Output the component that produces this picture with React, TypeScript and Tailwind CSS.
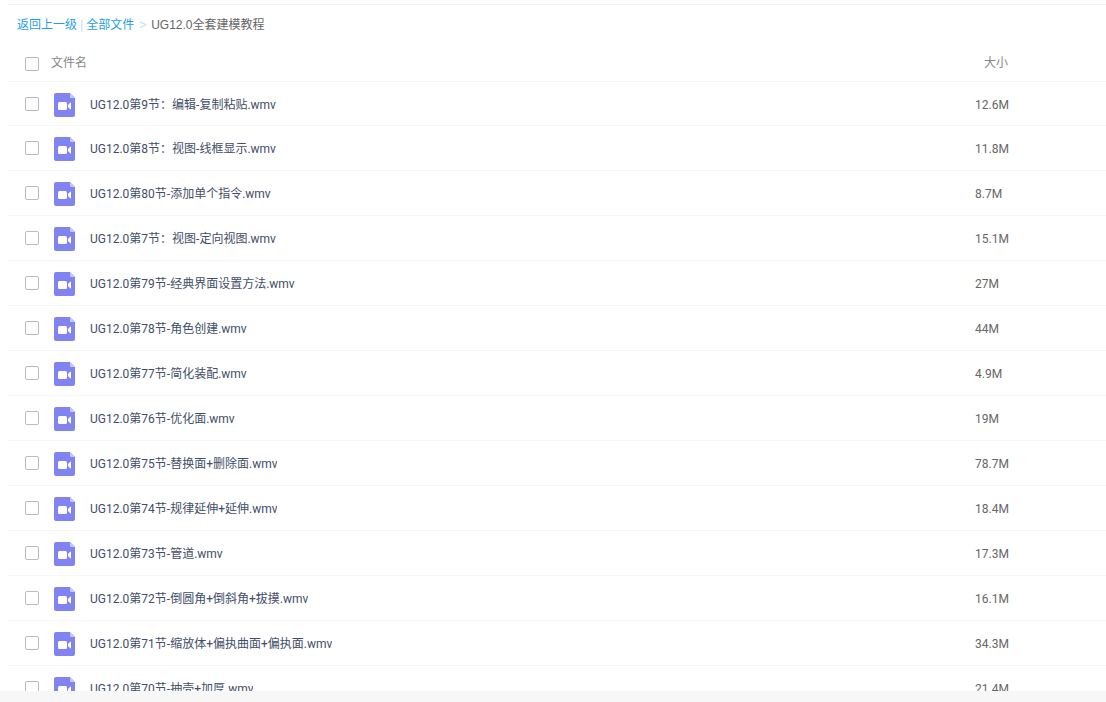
import React, { useState } from "react";

type FileItem = {
  name: string;
  size: string;
};

const files: FileItem[] = [
  { name: "UG12.0第9节：编辑-复制粘贴.wmv", size: "12.6M" },
  { name: "UG12.0第8节：视图-线框显示.wmv", size: "11.8M" },
  { name: "UG12.0第80节-添加单个指令.wmv", size: "8.7M" },
  { name: "UG12.0第7节：视图-定向视图.wmv", size: "15.1M" },
  { name: "UG12.0第79节-经典界面设置方法.wmv", size: "27M" },
  { name: "UG12.0第78节-角色创建.wmv", size: "44M" },
  { name: "UG12.0第77节-简化装配.wmv", size: "4.9M" },
  { name: "UG12.0第76节-优化面.wmv", size: "19M" },
  { name: "UG12.0第75节-替换面+删除面.wmv", size: "78.7M" },
  { name: "UG12.0第74节-规律延伸+延伸.wmv", size: "18.4M" },
  { name: "UG12.0第73节-管道.wmv", size: "17.3M" },
  { name: "UG12.0第72节-倒圆角+倒斜角+拔摸.wmv", size: "16.1M" },
  { name: "UG12.0第71节-缩放体+偏执曲面+偏执面.wmv", size: "34.3M" },
  { name: "UG12.0第70节-抽壳+加厚.wmv", size: "21.4M" },
];

const VideoIcon: React.FC = () => (
  <svg width="21" height="24" viewBox="0 0 21 24" className="shrink-0" aria-hidden="true">
    <path d="M2 0H16l5 5v17a2 2 0 0 1-2 2H2a2 2 0 0 1-2-2V2a2 2 0 0 1 2-2z" fill="#8183f1" />
    <path d="M16 0l5 5h-4a1 1 0 0 1-1-1z" fill="#c6c7fb" />
    <rect x="4" y="9" width="9" height="8" rx="1.500" fill="#fff" />
    <path d="M14 12l2.200-2.200q.8-.6.8.4v5.600q0 1-.8.4L14 14z" fill="#fff" />
  </svg>
);

interface CheckBoxProps {
  label: string;
  checked: boolean;
  onChange: () => void;
}

const CheckBox: React.FC<CheckBoxProps> = ({ label, checked, onChange }) => (
  <input
    type="checkbox"
    aria-label={label}
    checked={checked}
    onChange={onChange}
    className="block size-3.5 appearance-none rounded-xs border border-[#b9bbc4] bg-white checked:border-[#09aaff] checked:bg-[#09aaff]"
  />
);

const App: React.FC = () => {
  const [selected, setSelected] = useState<string[]>([]);

  const allSelected = selected.length === files.length;

  const toggle = (name: string) => {
    setSelected((prev) => (prev.includes(name) ? prev.filter((n) => n !== name) : [...prev, name]));
  };

  return (
    <div className="flex h-screen flex-col bg-white pt-1 font-['Roboto','Noto_Sans_CJK_SC',sans-serif] text-xs text-[#424e67]">
      <main className="min-h-0 flex-1 overflow-hidden pl-2">
        <nav
          aria-label="路径"
          className="flex h-10 items-center border-t border-[#f3f3f5] pl-[9px] font-['Liberation_Sans','Noto_Sans_CJK_SC',sans-serif]"
        >
          <a href="#parent" className="text-[#1e9fe8]">返回上一级</a>
          <span className="px-[3px] text-[#c4dbfe]">|</span>
          <a href="#all" className="text-[#1e9fe8]">全部文件</a>
          <span className="px-[5px] text-[#c4dbfe]">&gt;</span>
          <span className="text-[#666666]">UG12.0全套建模教程</span>
        </nav>
        <table className="w-full table-fixed border-separate border-spacing-0 text-left">
          <thead>
            <tr className="h-[38px] text-[#888888]">
              <th className="w-[43px] border-b border-[#f5f6f8] p-0 pt-0.5 pl-[17px]">
                <CheckBox
                  label="全选"
                  checked={allSelected}
                  onChange={() => setSelected(allSelected ? [] : files.map((f) => f.name))}
                />
              </th>
              <th className="border-b border-[#f5f6f8] p-0 font-normal">文件名</th>
              <th className="w-[131px] border-b border-[#f5f6f8] p-0 pl-[9px] font-normal">大小</th>
            </tr>
          </thead>
          <tbody>
            {files.map((file) => (
              <tr key={file.name} className="h-[45px] first:h-11">
                <td className="border-b border-[#f5f6f8] p-0 pl-[17px]">
                  <CheckBox
                    label={file.name}
                    checked={selected.includes(file.name)}
                    onChange={() => toggle(file.name)}
                  />
                </td>
                <td className="border-b border-[#f5f6f8] p-0 pt-0.5">
                  <div className="flex items-center gap-[15px] pl-[3px]">
                    <VideoIcon />
                    <span className="truncate">{file.name}</span>
                  </div>
                </td>
                <td className="border-b border-[#f5f6f8] p-0 pt-0.5 text-[#666666]">{file.size}</td>
              </tr>
            ))}
          </tbody>
        </table>
      </main>
      <footer className="h-[11px] shrink-0 bg-[#f7f7f7]" />
    </div>
  );
};

export default App;
